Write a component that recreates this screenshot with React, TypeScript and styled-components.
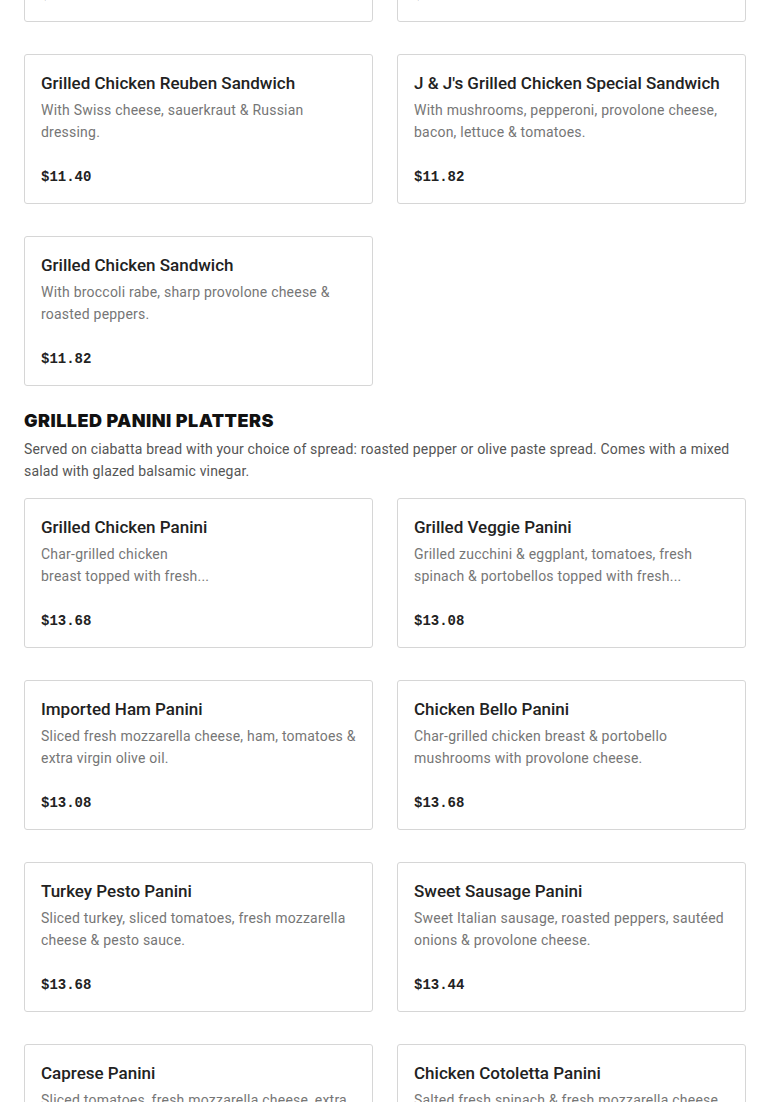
import React from "react";
import styled, { createGlobalStyle } from "styled-components";

const GlobalStyle = createGlobalStyle`
  html, body { margin: 0; padding: 0; background: #ffffff; }
  body { font-family: "Roboto", "Noto Sans", sans-serif; color: #1f1f1f; }
  * { box-sizing: border-box; }
`;

const Page = styled.div`
  width: 770px;
  padding: 0 24px 40px;
  margin-top: -128px;
`;

const Section = styled.section`
  display: flex;
  flex-direction: column;
  & + & { margin-top: 24px; }
`;

const SectionTitle = styled.h2`
  margin: 0;
  font-family: "Inter", "Liberation Sans", sans-serif;
  font-weight: 900;
  font-size: 18px;
  line-height: 22px;
  letter-spacing: 0.45px;
  color: #111;
  text-transform: uppercase;
`;

const SectionDesc = styled.p`
  margin: 6px 0 0;
  font-size: 14px;
  line-height: 22px;
  letter-spacing: 0.15px;
  color: #555;
`;

const Grid = styled.div<{ $offset?: boolean }>`
  display: grid;
  grid-template-columns: 349px 349px;
  column-gap: 24px;
  row-gap: 32px;
  margin-top: ${(p) => (p.$offset ? "16px" : "0")};
`;

const Card = styled.div`
  height: 150px;
  border: 1px solid #d6d6d6;
  border-radius: 3px;
  padding: 16px;
  display: flex;
  flex-direction: column;
  background: #fff;
`;

const ItemName = styled.h3`
  margin: 0;
  font-size: 17px;
  line-height: 24px;
  font-weight: 500;
  color: #222;
`;

const ItemDesc = styled.p`
  margin: 4px 0 0;
  font-size: 14px;
  line-height: 22px;
  letter-spacing: 0.22px;
  color: #767676;
  max-height: 44px;
  overflow: hidden;
`;

const Price = styled.div`
  margin-top: auto;
  margin-bottom: -1px;
  font-family: "Liberation Mono", "DejaVu Sans Mono", monospace;
  font-weight: 700;
  font-size: 14px;
  line-height: 22px;
  color: #222;
`;

type Item = { name: string; desc: string; price: string };

const sandwiches: Item[] = [
  { name: "Grilled Chicken Parmigiana Sandwich", desc: "With tomato sauce & melted mozzarella cheese.", price: "$11.40" },
  { name: "Grilled Chicken Caesar Sandwich", desc: "With romaine lettuce, parmesan cheese & Caesar dressing.", price: "$11.40" },
  { name: "Grilled Chicken Reuben Sandwich", desc: "With Swiss cheese, sauerkraut & Russian dressing.", price: "$11.40" },
  { name: "J & J's Grilled Chicken Special Sandwich", desc: "With mushrooms, pepperoni, provolone cheese, bacon, lettuce & tomatoes.", price: "$11.82" },
  { name: "Grilled Chicken Sandwich", desc: "With broccoli rabe, sharp provolone cheese & roasted peppers.", price: "$11.82" },
];

const panini: Item[] = [
  { name: "Grilled Chicken Panini", desc: "Char-grilled chicken\nbreast topped with fresh...", price: "$13.68" },
  { name: "Grilled Veggie Panini", desc: "Grilled zucchini & eggplant, tomatoes, fresh spinach & portobellos topped with fresh...", price: "$13.08" },
  { name: "Imported Ham Panini", desc: "Sliced fresh mozzarella cheese, ham, tomatoes & extra virgin olive oil.", price: "$13.08" },
  { name: "Chicken Bello Panini", desc: "Char-grilled chicken breast & portobello mushrooms with provolone cheese.", price: "$13.68" },
  { name: "Turkey Pesto Panini", desc: "Sliced turkey, sliced tomatoes, fresh mozzarella cheese & pesto sauce.", price: "$13.68" },
  { name: "Sweet Sausage Panini", desc: "Sweet Italian sausage, roasted peppers, sautéed onions & provolone cheese.", price: "$13.44" },
  { name: "Caprese Panini", desc: "Sliced tomatoes, fresh mozzarella cheese, extra virgin olive oil & fresh basil.", price: "$13.08" },
  { name: "Chicken Cotoletta Panini", desc: "Salted fresh spinach & fresh mozzarella cheese with breaded chicken cutlet.", price: "$13.68" },
];

const MenuCard = ({ item }: { item: Item }) => (
  <Card>
    <ItemName>{item.name}</ItemName>
    <ItemDesc>
      {item.desc.split("\n").map((line, i, arr) => (
        <React.Fragment key={i}>
          {line}
          {i < arr.length - 1 && <br />}
        </React.Fragment>
      ))}
    </ItemDesc>
    <Price>{item.price}</Price>
  </Card>
);

export default function App() {
  return (
    <>
      <GlobalStyle />
      <Page>
        <Section>
          <Grid>
            {sandwiches.map((it) => (
              <MenuCard key={it.name} item={it} />
            ))}
          </Grid>
        </Section>
        <Section>
          <SectionTitle>Grilled Panini Platters</SectionTitle>
          <SectionDesc>
            Served on ciabatta bread with your choice of spread: roasted pepper or olive paste spread. Comes with a mixed salad with glazed balsamic vinegar.
          </SectionDesc>
          <Grid $offset>
            {panini.map((it) => (
              <MenuCard key={it.name} item={it} />
            ))}
          </Grid>
        </Section>
      </Page>
    </>
  );
}
